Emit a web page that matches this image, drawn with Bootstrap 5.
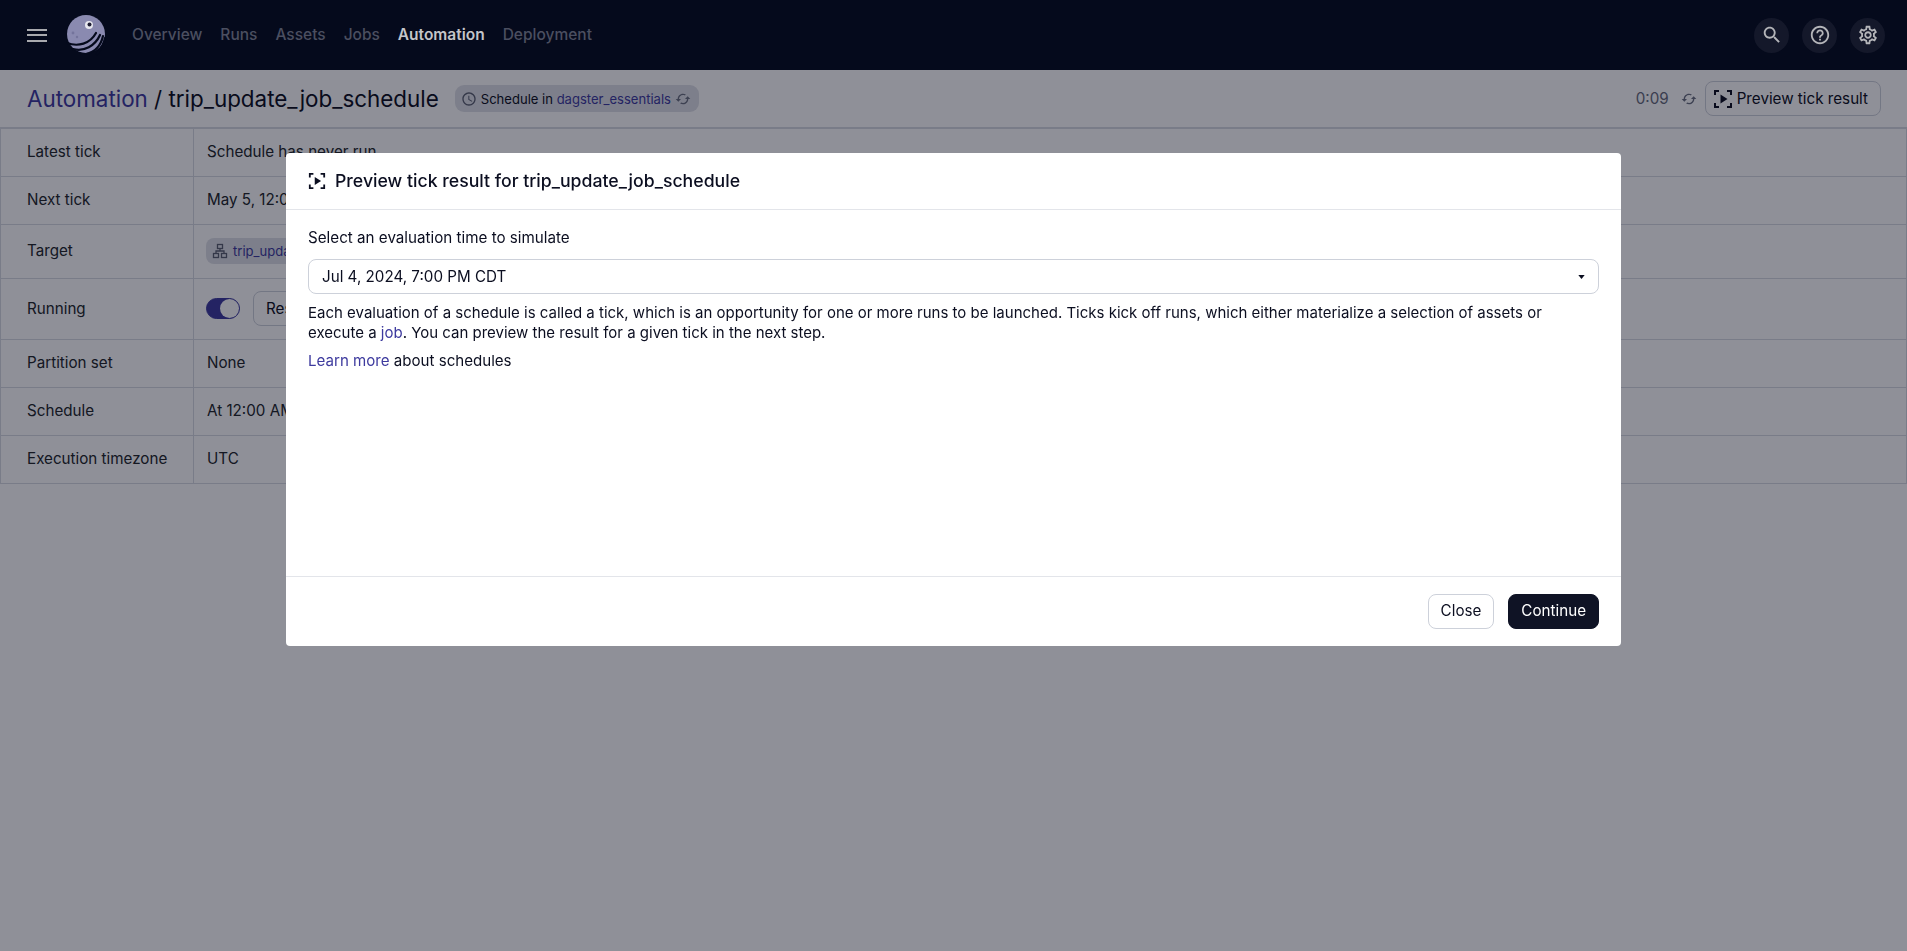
<!DOCTYPE html>
<html lang="en">
<head>
    <meta charset="UTF-8">
    <meta name="viewport" content="width=device-width, initial-scale=1.0">
    <title>Automation / trip_update_job_schedule</title>
    <link href="https://cdn.jsdelivr.net/npm/bootstrap@5.3.0/dist/css/bootstrap.min.css" rel="stylesheet">
    <style>
        body {
            font-family: Inter, "Liberation Sans", sans-serif;
            font-size: 15.2px;
            line-height: 20px;
            color: #0b0e20;
            background: #fff;
            min-height: 951px;
        }

        a { color: #3d3a9e; text-decoration: none; }

        /* top bar stays above the backdrop, as in the reference */
        .top-bar {
            height: 70px;
            background: #050a1c;
            padding: 0 22px 0 27px;
            position: relative;
            z-index: 1051;
        }

        .bar-link {
            font-size: 15.5px;
            font-weight: 500;
            color: #4b4f60;
            padding: 0;
        }

        .bar-link.is-active { color: #c4c5c9; font-weight: 600; }

        .menu-lines { width: 20px; height: 13px; border-top: 2px solid #a9aaae; border-bottom: 2px solid #a9aaae; position: relative; }
        .menu-lines::after { content: ""; position: absolute; left: 0; right: 0; top: 3.5px; height: 2px; background: #a9aaae; }

        .logo-mark { margin: 0 26px 0 19px; }

        .round-btn {
            width: 35px;
            height: 35px;
            border-radius: 50%;
            background: #14182a;
            border: 0;
            padding: 0;
            color: #b4b5b9;
        }

        .sub-bar {
            height: 58px;
            padding: 0 26px 0 27px;
            border-bottom: 1px solid #d8dbe2;
        }

        .page-title { font-size: 22.4px; font-weight: 400; line-height: 28px; margin: 0; }

        .tag-pill {
            background: #dfe1e7;
            border-radius: 9px;
            height: 27px;
            padding: 0 8px 0 6px;
            font-size: 13.05px;
        }

        .time-left { color: #666a7a; }

        .sched-table { width: 100%; margin: 0; border-color: #d8dbe2; --bs-table-bg: transparent; }
        .sched-table td { padding: 13px 13px 14px; vertical-align: middle; border-color: #d8dbe2; white-space: nowrap; }
        .sched-table td:first-child { width: 193px; padding-left: 26px; }
        .sched-table tr.row-running td { padding-top: 12px; padding-bottom: 13px; }

        .job-tag { display: inline-flex; align-items: center; gap: 5px; background: #dfe1e7; border-radius: 8px; height: 26px; padding: 0 8px 0 6px; margin-left: -1px; font-size: 13.05px; vertical-align: middle; }

        .plain-btn {
            font-size: 15.2px;
            line-height: 20px;
            color: #0b0e20;
            background: #fff;
            border: 1px solid #cdd1da;
            border-radius: 8px;
            padding: 6.5px 12px;
        }

        .preview-btn { padding-left: 7px; }

        .dark-btn { background: #0f1325; border-color: #0f1325; color: #fff; }
        .dark-btn:hover { background: #0f1325; color: #fff; }

        .run-toggle { width: 34px; height: 21px; border-radius: 11px; background: #3d3a9e; border: 1px solid #3d3a9e; position: relative; margin-left: -1px; flex-shrink: 0; }
        .run-toggle::after { content: ""; position: absolute; top: 0; right: 0; width: 19px; height: 19px; border-radius: 50%; background: #fff; }

        .tick-dialog { max-width: 1335px; width: 1335px; margin: 153px 0 0 286px; }
        .tick-dialog .modal-content { height: 493px; border: 0; border-radius: 4px; }
        .tick-dialog .modal-header { height: 57px; padding: 0 22px; border-bottom: 1px solid #e3e5ea; gap: 9px; }
        .tick-dialog .modal-title { font-size: 17.7px; font-weight: 500; line-height: 24px; }
        .tick-dialog .modal-body { padding: 18px 22px; }
        .tick-dialog .modal-footer { height: 70px; padding: 0 22px 1px; border-top: 1px solid #e3e5ea; gap: 14px; }
        .tick-dialog .modal-footer > * { margin: 0; }

        .modal-backdrop.show { background: #06081a; opacity: .45; }

        .time-select { height: 35px; padding: 0 13px; border-radius: 8px; margin: 11px 0 9px; }
        .help-para { margin: 0 0 8px; font-size: 15px; }
        .learn-line { font-size: 15.1px; }
    </style>
</head>

<body>
    <nav class="top-bar d-flex align-items-center">
        <div class="menu-lines"></div>
        <svg class="logo-mark flex-shrink-0" width="40" height="42" viewBox="0 0 40 42">
            <circle cx="20" cy="20" r="19" fill="#8a8ab0"/>
            <circle cx="7" cy="19" r="1.4" fill="#74749c"/>
            <circle cx="11" cy="23" r="1.2" fill="#74749c"/>
            <circle cx="23" cy="11" r="4" fill="#e7e7ef"/>
            <circle cx="23.5" cy="10.5" r="2" fill="#1d1d33"/>
            <g fill="none" stroke="#050a1c" stroke-width="2.2" stroke-linecap="round">
                <path d="M1 29C12 33 24 30 30 19"/>
                <path d="M7 35C18 38 29 32 34 21"/>
                <path d="M20 40C29 38 35 31 37 22"/>
                <path d="M31 40C35 35 38 30 39 24"/>
            </g>
        </svg>
        <div class="d-flex align-items-center flex-grow-1" style="gap:18px">
            <a class="nav-link bar-link" href="#">Overview</a>
            <a class="nav-link bar-link" href="#">Runs</a>
            <a class="nav-link bar-link" href="#">Assets</a>
            <a class="nav-link bar-link" href="#">Jobs</a>
            <a class="nav-link bar-link is-active" href="#">Automation</a>
            <a class="nav-link bar-link" href="#">Deployment</a>
        </div>
        <div class="d-flex align-items-center" style="gap:13px">
            <button class="round-btn d-flex align-items-center justify-content-center">
                <svg width="22" height="22" viewBox="0 0 24 24" fill="currentColor"><path d="M15.5 14h-.79l-.28-.27C15.41 12.59 16 11.11 16 9.5 16 5.91 13.09 3 9.5 3S3 5.91 3 9.5 5.91 16 9.5 16c1.61 0 3.09-.59 4.23-1.57l.27.28v.79l5 4.99L20.49 19l-4.99-5zm-6 0C7.01 14 5 11.99 5 9.5S7.01 5 9.5 5 14 7.01 14 9.5 11.99 14 9.5 14z"/></svg>
            </button>
            <button class="round-btn d-flex align-items-center justify-content-center">
                <svg width="22" height="22" viewBox="0 0 24 24" fill="currentColor"><path d="M11 18h2v-2h-2v2zm1-16C6.48 2 2 6.48 2 12s4.48 10 10 10 10-4.48 10-10S17.52 2 12 2zm0 18c-4.41 0-8-3.59-8-8s3.59-8 8-8 8 3.59 8 8-3.59 8-8 8zm0-14c-2.21 0-4 1.79-4 4h2c0-1.1.9-2 2-2s2 .9 2 2c0 2-3 1.75-3 5h2c0-2.25 3-2.5 3-5 0-2.21-1.79-4-4-4z"/></svg>
            </button>
            <button class="round-btn d-flex align-items-center justify-content-center">
                <svg width="22" height="22" viewBox="0 0 24 24" fill="currentColor"><path d="M19.43 12.98c.04-.32.07-.64.07-.98 0-.34-.03-.66-.07-.98l2.11-1.65c.19-.15.24-.42.12-.64l-2-3.46c-.09-.16-.26-.25-.44-.25-.06 0-.12.01-.17.03l-2.49 1c-.52-.4-1.08-.73-1.69-.98l-.38-2.65C14.46 2.18 14.25 2 14 2h-4c-.25 0-.46.18-.49.42l-.38 2.65c-.61.25-1.17.59-1.69.98l-2.49-1c-.06-.02-.12-.03-.18-.03-.17 0-.34.09-.43.25l-2 3.46c-.13.22-.07.49.12.64l2.11 1.65c-.04.32-.07.65-.07.98 0 .33.03.66.07.98l-2.11 1.65c-.19.15-.24.42-.12.64l2 3.46c.09.16.26.25.44.25.06 0 .12-.01.17-.03l2.49-1c.52.4 1.08.73 1.69.98l.38 2.65c.03.24.24.42.49.42h4c.25 0 .46-.18.49-.42l.38-2.65c.61-.25 1.17-.59 1.69-.98l2.49 1c.06.02.12.03.18.03.17 0 .34-.09.43-.25l2-3.46c.12-.22.07-.49-.12-.64l-2.11-1.65zm-1.98-1.71c.04.31.05.52.05.73 0 .21-.02.43-.05.73l-.14 1.13.89.7 1.08.84-.7 1.21-1.27-.51-1.04-.42-.9.68c-.43.32-.84.56-1.25.73l-1.06.43-.16 1.13-.2 1.35h-1.4l-.19-1.35-.16-1.13-1.06-.43c-.43-.18-.83-.41-1.23-.71l-.91-.7-1.06.43-1.27.51-.7-1.21 1.08-.84.89-.7-.14-1.13c-.03-.31-.05-.54-.05-.74s.02-.43.05-.73l.14-1.13-.89-.7-1.08-.84.7-1.21 1.27.51 1.04.42.9-.68c.43-.32.84-.56 1.25-.73l1.06-.43.16-1.13.2-1.35h1.39l.19 1.35.16 1.13 1.06.43c.43.18.83.41 1.23.71l.91.7 1.06-.43 1.27-.51.7 1.21-1.07.85-.89.7.14 1.13zM12 8c-2.21 0-4 1.79-4 4s1.79 4 4 4 4-1.79 4-4-1.79-4-4-4zm0 6c-1.1 0-2-.9-2-2s.9-2 2-2 2 .9 2 2-.9 2-2 2z"/></svg>
            </button>
        </div>
    </nav>

    <div class="sub-bar d-flex align-items-center">
        <h1 class="page-title"><a href="#">Automation</a> / trip_update_job_schedule</h1>
        <div class="tag-pill d-inline-flex align-items-center gap-1 ms-3">
            <svg width="16" height="16" viewBox="0 0 24 24" fill="#5a5f70"><path d="M11.99 2C6.47 2 2 6.48 2 12s4.47 10 9.99 10C17.52 22 22 17.52 22 12S17.52 2 11.99 2zM12 20c-4.42 0-8-3.58-8-8s3.58-8 8-8 8 3.58 8 8-3.58 8-8 8zm.5-13H11v6l5.25 3.15.75-1.23-4.5-2.67z"/></svg>
            <span>Schedule in <a href="#">dagster_essentials</a></span>
            <svg width="16" height="16" viewBox="0 0 24 24" fill="#6b7080"><path d="M19 8l-4 4h3c0 3.31-2.69 6-6 6-1.01 0-1.97-.25-2.8-.7l-1.46 1.46C8.97 19.54 10.43 20 12 20c4.42 0 8-3.58 8-8h3l-4-4zM6 12c0-3.31 2.69-6 6-6 1.01 0 1.97.25 2.8.7l1.46-1.46C15.03 4.46 13.57 4 12 4c-4.42 0-8 3.58-8 8H1l4 4 4-4H6z"/></svg>
        </div>
        <div class="ms-auto d-flex align-items-center">
            <span class="time-left">0:09</span>
            <svg class="me-2" style="margin-left:12px" width="16" height="16" viewBox="0 0 24 24" fill="#6b7080"><path d="M19 8l-4 4h3c0 3.31-2.69 6-6 6-1.01 0-1.97-.25-2.8-.7l-1.46 1.46C8.97 19.54 10.43 20 12 20c4.42 0 8-3.58 8-8h3l-4-4zM6 12c0-3.31 2.69-6 6-6 1.01 0 1.97.25 2.8.7l1.46-1.46C15.03 4.46 13.57 4 12 4c-4.42 0-8 3.58-8 8H1l4 4 4-4H6z"/></svg>
            <button class="btn plain-btn preview-btn d-inline-flex align-items-center gap-1">
                <svg width="20" height="20" viewBox="0 0 20 20" fill="none" stroke="#0b0e20" stroke-width="2"><path d="M2 6V2H6M14 2H18V6M18 14V18H14M6 18H2V14"/><path d="M7.5 5.5L14.5 10L7.5 14.5Z" fill="#0b0e20" stroke="none"/></svg>
                Preview tick result
            </button>
        </div>
    </div>

    <table class="table table-bordered sched-table">
        <tbody>
            <tr><td>Latest tick</td><td>Schedule has never run</td></tr>
            <tr><td>Next tick</td><td>May 5, 12:00 AM CDT</td></tr>
            <tr>
                <td>Target</td>
                <td><span class="job-tag">
                    <svg width="16" height="16" viewBox="0 0 16 16" fill="none" stroke="#5a5f70" stroke-width="1.3"><rect x="5.5" y="1.5" width="5" height="4"/><rect x="1.5" y="10.5" width="5" height="4"/><rect x="9.5" y="10.5" width="5" height="4"/><path d="M8 5.5V8M4 10.5V8H12V10.5"/></svg>
                    <a href="#">trip_update_job</a></span></td>
            </tr>
            <tr class="row-running">
                <td>Running</td>
                <td>
                    <div class="d-flex align-items-center" style="gap:13px">
                        <div class="run-toggle" role="switch" aria-checked="true"></div>
                        <button class="btn plain-btn">Reset schedule state</button>
                    </div>
                </td>
            </tr>
            <tr><td>Partition set</td><td>None</td></tr>
            <tr><td>Schedule</td><td>At 12:00 AM, on day 1 of the month</td></tr>
            <tr><td>Execution timezone</td><td>UTC</td></tr>
        </tbody>
    </table>

    <div class="modal-backdrop show"></div>
    <div class="modal d-block" tabindex="-1">
        <div class="modal-dialog tick-dialog">
            <div class="modal-content">
                <div class="modal-header justify-content-start">
                    <svg width="18" height="18" viewBox="0 0 20 20" fill="none" stroke="#0b0e20" stroke-width="2"><path d="M2 6V2H6M14 2H18V6M18 14V18H14M6 18H2V14"/><path d="M7.5 5.5L14.5 10L7.5 14.5Z" fill="#0b0e20" stroke="none"/></svg>
                    <h5 class="modal-title">Preview tick result for trip_update_job_schedule</h5>
                </div>
                <div class="modal-body">
                    <div>Select an evaluation time to simulate</div>
                    <button class="btn plain-btn w-100 d-flex align-items-center justify-content-between time-select">
                        <span>Jul 4, 2024, 7:00 PM CDT</span>
                        <svg width="7" height="4" viewBox="0 0 8 5"><path d="M0 0H8L4 5Z" fill="#0b0e20"/></svg>
                    </button>
                    <p class="help-para">Each evaluation of a schedule is called a tick, which is an opportunity for one or more runs to be launched. Ticks kick off runs, which either materialize a selection of assets or execute a <a href="#">job</a>. You can preview the result for a given tick in the next step.</p>
                    <div class="learn-line"><a href="#">Learn more</a> about schedules</div>
                </div>
                <div class="modal-footer">
                    <button class="btn plain-btn">Close</button>
                    <button class="btn plain-btn dark-btn">Continue</button>
                </div>
            </div>
        </div>
    </div>

    <script src="https://cdn.jsdelivr.net/npm/bootstrap@5.3.0/dist/js/bootstrap.bundle.min.js"></script>
</body>
</html>
